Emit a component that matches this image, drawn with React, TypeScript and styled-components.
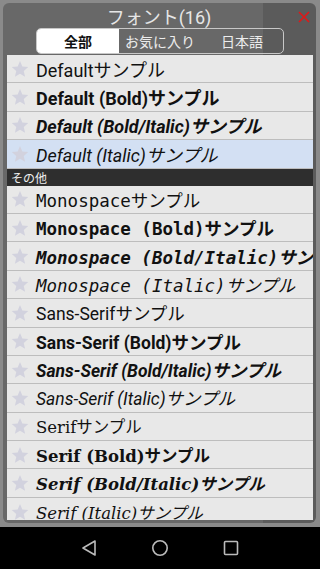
import React from "react";
import styled, { createGlobalStyle } from "styled-components";

const GlobalStyle = createGlobalStyle`
  html, body {
    margin: 0;
    padding: 0;
    background: #000;
  }
  * {
    box-sizing: border-box;
  }
`;

const Screen = styled.div`
  width: 320px;
  height: 569px;
  display: flex;
  flex-direction: column;
  overflow: hidden;
  font-family: Roboto, "Noto Sans CJK JP", sans-serif;
`;

const Backdrop = styled.div`
  flex: 1;
  min-height: 0;
  display: flex;
  padding: 3px 4px 4px 3px;
  background: #8a8a8a;
`;

const Dialog = styled.div`
  flex: 1;
  min-width: 0;
  display: flex;
  flex-direction: column;
  border-radius: 6px;
  background: linear-gradient(to right, #686868 0, #686868 83%, #5b5b5b 83%);
  padding: 0 3px 3px 4px;
  overflow: hidden;
`;

const Header = styled.div`
  height: 25px;
  flex-shrink: 0;
  display: flex;
  align-items: center;
  justify-content: center;
  position: relative;
`;

const Title = styled.div`
  color: #e6e6e6;
  font-size: 18px;
  font-family: Roboto, "Noto Sans CJK JP", sans-serif;
  margin-left: -2px;
`;

const Close = styled.div`
  position: absolute;
  right: 2px;
  top: 6px;
  width: 14px;
  height: 14px;
`;

const Tabs = styled.div`
  align-self: center;
  width: 248px;
  height: 26px;
  flex-shrink: 0;
  display: grid;
  grid-template-columns: repeat(3, 1fr);
  border: 1px solid #c8c8c8;
  border-radius: 5px;
  overflow: hidden;
  margin-bottom: 1px;
`;

const Tab = styled.div<{ $active?: boolean }>`
  display: flex;
  align-items: center;
  justify-content: center;
  font-size: 14px;
  font-family: "Noto Sans CJK JP", sans-serif;
  font-weight: ${(p) => (p.$active ? 700 : 400)};
  color: ${(p) => (p.$active ? "#111" : "#ececec")};
  background: ${(p) => (p.$active ? "#fff" : "transparent")};
`;

const List = styled.div`
  flex: 1;
  min-height: 0;
  overflow: hidden;
  background: #e8e8e8;
`;

const Row = styled.div<{ $selected?: boolean }>`
  height: 28.4px;
  display: flex;
  align-items: center;
  gap: 6px;
  padding-left: 3px;
  border-bottom: 1px solid #bdbdbd;
  background: ${(p) => (p.$selected ? "#d3e0f3" : "#e8e8e8")};
  white-space: nowrap;
  overflow: hidden;

  svg {
    flex-shrink: 0;
  }
`;

const Sample = styled.span<{ $family: string; $bold?: boolean; $italic?: boolean; $size: number }>`
  font-family: ${(p) => p.$family}, "Noto Sans CJK JP", sans-serif;
  font-weight: ${(p) => (p.$bold ? 700 : 400)};
  font-style: ${(p) => (p.$italic ? "italic" : "normal")};
  font-size: ${(p) => p.$size}px;
  color: #111;
`;

const Section = styled.div`
  height: 17px;
  display: flex;
  align-items: center;
  padding-left: 4px;
  background: #2e2e2e;
  color: #eee;
  font-size: 12px;
  font-family: "Noto Sans CJK JP", sans-serif;
`;

const NavBar = styled.div`
  height: 42px;
  flex-shrink: 0;
  background: #000;
  display: grid;
  grid-template-columns: 1fr 1fr 1fr;
  align-items: center;
  justify-items: center;
  padding: 0 53px;
`;

const Star = () => (
  <svg width="20" height="20" viewBox="0 0 24 24">
    <path
      d="M12 2.5l2.8 6.6 7.1.6-5.4 4.7 1.6 7-6.1-3.7-6.1 3.7 1.6-7L2.1 9.7l7.1-.6z"
      fill="#d2d2de"
    />
  </svg>
);

type Item = { name: string; family: string; bold?: boolean; italic?: boolean; size: number };

const variants = (label: string, family: string, size: number): Item[] => [
  { name: `${label}サンプル`, family, size },
  { name: `${label} (Bold)サンプル`, family, bold: true, size },
  { name: `${label} (Bold/Italic)サンプル`, family, bold: true, italic: true, size },
  { name: `${label} (Italic)サンプル`, family, italic: true, size },
];

const defaults = variants("Default", "Roboto", 18);
const others = [
  ...variants("Monospace", '"DejaVu Sans Mono"', 17.5),
  ...variants("Sans-Serif", "Roboto", 17.5),
  ...variants("Serif", '"DejaVu Serif"', 16.5),
];

const FontRow = ({ item, selected }: { item: Item; selected?: boolean }) => (
  <Row $selected={selected}>
    <Star />
    <Sample $family={item.family} $bold={item.bold} $italic={item.italic} $size={item.size}>
      {item.name}
    </Sample>
  </Row>
);

const App: React.FC = () => {
  return (
    <Screen>
      <GlobalStyle />
      <Backdrop>
        <Dialog>
          <Header>
            <Title>フォント(16)</Title>
            <Close>
              <svg width="14" height="14" viewBox="0 0 14 14">
                <path d="M2 2l10 10M12 2L2 12" stroke="#e01818" strokeWidth="1.6" />
              </svg>
            </Close>
          </Header>
          <Tabs>
            <Tab $active>全部</Tab>
            <Tab>お気に入り</Tab>
            <Tab>日本語</Tab>
          </Tabs>
          <List>
            {defaults.map((item, i) => (
              <FontRow key={item.name} item={item} selected={i === 3} />
            ))}
            <Section>その他</Section>
            {others.map((item) => (
              <FontRow key={item.name} item={item} />
            ))}
          </List>
        </Dialog>
      </Backdrop>
      <NavBar>
        <svg width="18" height="18" viewBox="0 0 18 18">
          <path d="M15 2L3 9l12 7z" fill="none" stroke="#bbb" strokeWidth="1.6" strokeLinejoin="round" />
        </svg>
        <svg width="18" height="18" viewBox="0 0 18 18">
          <circle cx="9" cy="9" r="7.2" fill="none" stroke="#bbb" strokeWidth="1.6" />
        </svg>
        <svg width="16" height="16" viewBox="0 0 16 16">
          <rect x="1.5" y="1.5" width="13" height="13" rx="1" fill="none" stroke="#bbb" strokeWidth="1.6" />
        </svg>
      </NavBar>
    </Screen>
  );
};

export default App;
